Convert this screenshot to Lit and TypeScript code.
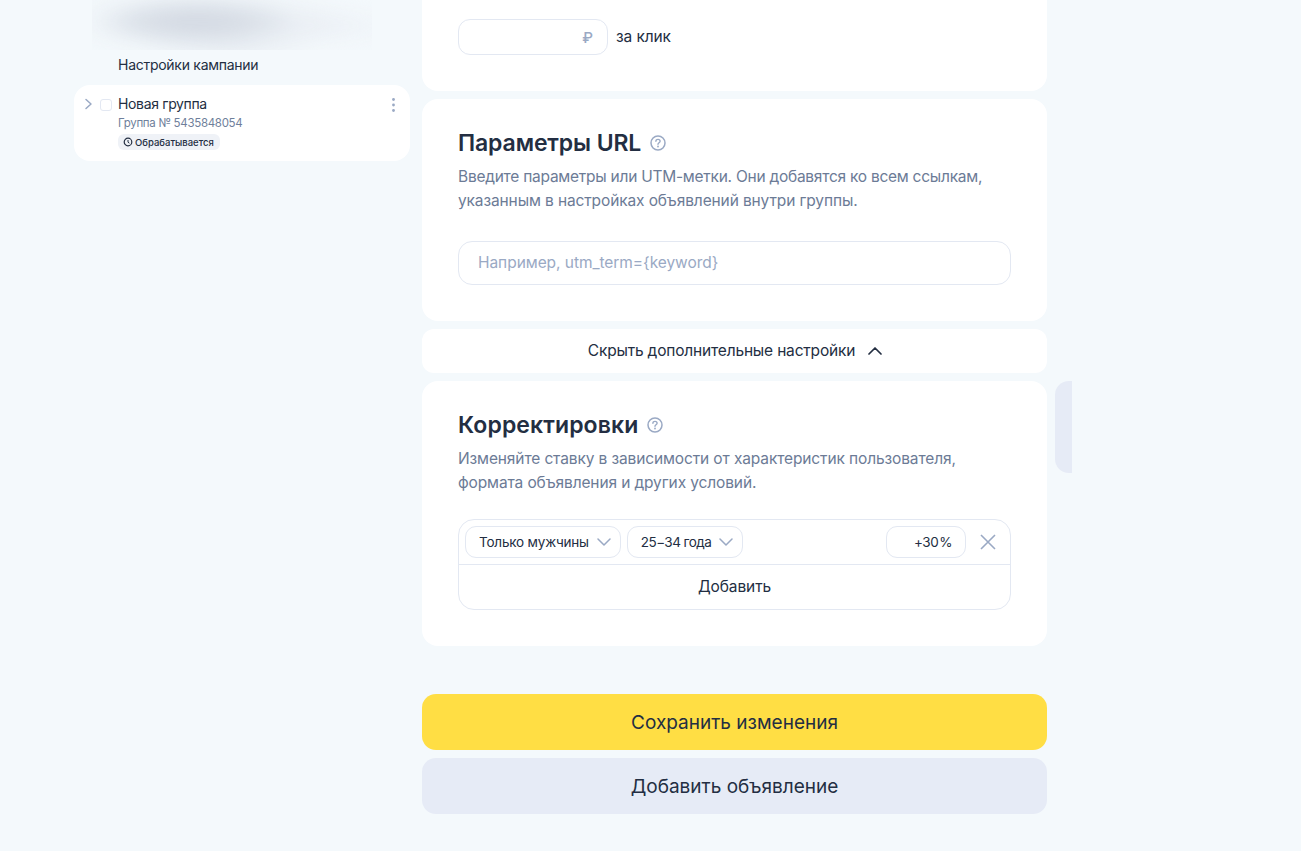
import { LitElement, html, css } from "lit";
import { customElement } from "lit/decorators.js";

const help = () => html`<svg class="help" width="18" height="18" viewBox="0 0 18 18" fill="none">
  <circle cx="9" cy="9" r="7" stroke="#9aa9c4" stroke-width="1.5"/>
  <path d="M6.9 7.3c0-1.2 1-1.9 2.1-1.9s2.1.7 2.1 1.8c0 1.5-2.1 1.6-2.1 3" stroke="#9aa9c4" stroke-width="1.4" stroke-linecap="round"/>
  <circle cx="9" cy="12.5" r=".9" fill="#9aa9c4"/></svg>`;

const chev = () => html`<svg class="chev" width="14" height="8" viewBox="0 0 14 8" fill="none">
  <path d="M1 1l6 6 6-6" stroke="#9aa9c4" stroke-width="1.5" stroke-linecap="round" stroke-linejoin="round"/></svg>`;

@customElement("app-root")
export class AppRoot extends LitElement {
  static styles = css`
    :host { display: block; height: 851px; overflow: hidden; background: #f4f9fc;
      font-family: Inter, "Noto Sans", sans-serif; color: #232e42; }
    * { box-sizing: border-box; }
    .page { display: flex; align-items: flex-start; padding-left: 74px; gap: 12px; }
    .side { width: 336px; flex: none; display: flex; flex-direction: column; }
    .blurwrap { height: 50px; margin-left: 18px; width: 280px; overflow: hidden; }
    .blur { height: 90px; margin: -20px -20px 0; filter: blur(8px); background:
      radial-gradient(ellipse 105px 24px at 125px 42px, #d2d8e2 0%, #dae0e8 55%, transparent 100%),
      radial-gradient(ellipse 150px 40px at 130px 40px, #e6ebf1 0%, transparent 100%),
      radial-gradient(ellipse 90px 14px at 160px 66px, #e6ebf1 0%, transparent 100%),
      radial-gradient(ellipse 120px 22px at 230px 46px, #ebeff5 0%, transparent 100%); }
    .camp { font-size: 14px; line-height: 20px; margin: 5px 0 10px 44px; letter-spacing: -.27px; }
    .group { background: #fff; border-radius: 16px; height: 76px; display: flex; padding: 10px 12px 0 10px; }
    .arrow { width: 9px; margin-top: 3px; flex: none; }
    .cb { width: 12px; height: 12px; border: 1px solid #e3e8f2; border-radius: 3px; margin: 4px 6px 0 7px; flex: none; }
    .ginfo { flex: 1; min-width: 0; }
    .gname { font-size: 14px; line-height: 18px; letter-spacing: -.35px; }
    .gnum { font-size: 11.5px; line-height: 16px; color: #6f7f9b; margin-top: 2px; letter-spacing: -.3px; }
    .badge { display: inline-flex; align-items: center; gap: 2px; height: 16px; padding: 0 6px 0 5px; margin-top: 3px;
      background: #eff2f7; border-radius: 6px; font-size: 9.5px; font-weight: 500; white-space: nowrap; }
    .dots { width: 3px; margin-top: 3px; flex: none; margin-right: 3px; }
    .main { width: 625px; flex: none; display: flex; flex-direction: column; gap: 8px; }
    .card { background: #fff; border-radius: 16px; padding: 36px; }
    .card.first { height: 91px; border-radius: 0 0 16px 16px; padding: 19px 36px 0; display: flex; gap: 8px; align-items: flex-start; }
    .price { width: 150px; height: 36px; border: 1px solid #e3e8f2; border-radius: 12px; display: flex; align-items: center;
      justify-content: flex-end; padding-right: 14px; color: #9aa9c4; font-size: 15px; font-weight: 500; }
    .perclick { font-size: 15.5px; line-height: 35px; letter-spacing: -.1px; }
    .card.url { height: 222px; padding-top: 28px; }
    .card.adj { height: 265px; padding-top: 28px; }
    .head { display: flex; align-items: center; gap: 8px; height: 32px; }
    h2 { margin: 0; font-size: 23px; line-height: 32px; font-weight: 600; letter-spacing: -.12px; }
    h2.wide { letter-spacing: .1px; }
    .help { flex: none; }
    p { margin: 6px 0 0; font-size: 15.5px; line-height: 24px; color: #6c7b96; letter-spacing: -.25px; white-space: nowrap; }
    p.wide, p .wide { letter-spacing: -.12px; }
    .input { margin-top: 28px; height: 44px; border: 1px solid #e3e8f2; border-radius: 14px; padding: 0 19px 2px; display: flex;
      align-items: center; font-size: 15.5px; color: #9aa9c4; letter-spacing: -.05px; }
    .toggle { height: 44px; background: #fff; border-radius: 12px; display: flex; align-items: center; justify-content: center;
      gap: 13px; font-size: 15.5px; letter-spacing: -.18px; padding-left: 1px; padding-bottom: 1px; }
    .table { margin-top: 24px; border: 1px solid #e3e8f2; border-radius: 16px; height: 91px; }
    .row { height: 45px; border-bottom: 1px solid #e3e8f2; display: flex; align-items: center; padding: 0 14px 0 6px; gap: 6px; }
    .sel { height: 32px; border: 1px solid #e3e8f2; border-radius: 11px; display: flex; align-items: center; font-size: 13.5px;
      padding: 0 9px 0 13px; gap: 8px; letter-spacing: -.2px; white-space: nowrap; }
    .sel.tight { letter-spacing: -.55px; }
    .spacer { flex: 1; }
    .pct { width: 80px; height: 32px; border: 1px solid #e3e8f2; border-radius: 11px; display: flex; align-items: center;
      justify-content: flex-end; padding-right: 13px; font-size: 13.5px; letter-spacing: -.5px; margin-right: 8px; }
    .pct span { margin-left: 1px; }
    .add { height: 44px; display: flex; align-items: center; justify-content: center; font-size: 15.5px; letter-spacing: -.1px; padding-bottom: 1px; }
    .btn { height: 56px; border-radius: 14px; display: flex; align-items: center; justify-content: center; font-size: 19px; }
    .save { background: #ffde44; margin-top: 40px; }
    .more { background: #e6ebf6; }
    .tabcol { margin: 381px 0 0 -4px; width: 17px; height: 92px; background: #e6ebf6; border-radius: 14px 0 0 14px; flex: none; }
  `;

  render() {
    return html`<div class="page">
      <aside class="side">
        <div class="blurwrap"><div class="blur"></div></div>
        <div class="camp">Настройки кампании</div>
        <div class="group">
          <svg class="arrow" width="9" height="12" viewBox="0 0 9 12" fill="none"><path d="M2 1.5L7 6l-5 4.5" stroke="#9aa9c4" stroke-width="1.5" stroke-linecap="round" stroke-linejoin="round"/></svg>
          <span class="cb"></span>
          <div class="ginfo">
            <div class="gname">Новая группа</div>
            <div class="gnum">Группа № 5435848054</div>
            <span class="badge">
              <svg width="10" height="10" viewBox="0 0 10 10" fill="none"><circle cx="5" cy="5" r="3.8" stroke="#232e42" stroke-width="1.2"/><path d="M5 3v2.2l1.4 1" stroke="#232e42" stroke-width="1"/></svg>
              Обрабатывается
            </span>
          </div>
          <svg class="dots" width="3" height="14" viewBox="0 0 3 14" fill="#9aa9c4"><circle cx="1.5" cy="1.5" r="1.4"/><circle cx="1.5" cy="7" r="1.4"/><circle cx="1.5" cy="12.5" r="1.4"/></svg>
        </div>
      </aside>
      <main class="main">
        <section class="card first">
          <div class="price">₽</div>
          <span class="perclick">за клик</span>
        </section>
        <section class="card url">
          <div class="head"><h2>Параметры URL</h2>${help()}</div>
          <p>Введите параметры или UTM-метки. Они добавятся ко всем ссылкам,<br><span class="wide">указанным в настройках объявлений внутри группы.</span></p>
          <div class="input">Например, utm_term={keyword}</div>
        </section>
        <div class="toggle">Скрыть дополнительные настройки
          <svg width="14" height="8" viewBox="0 0 14 8" fill="none"><path d="M1 7l6-6 6 6" stroke="#232e42" stroke-width="1.7" stroke-linecap="round" stroke-linejoin="round"/></svg>
        </div>
        <section class="card adj">
          <div class="head"><h2 class="wide">Корректировки</h2>${help()}</div>
          <p class="wide">Изменяйте ставку в зависимости от характеристик пользователя,<br>формата объявления и других условий.</p>
          <div class="table">
            <div class="row">
              <div class="sel">Только мужчины ${chev()}</div>
              <div class="sel tight">25−34 года ${chev()}</div>
              <div class="spacer"></div>
              <div class="pct">+30<span>%</span></div>
              <svg width="16" height="16" viewBox="0 0 16 16" fill="none"><path d="M1 1l14 14M15 1L1 15" stroke="#9aa9c4" stroke-width="1.6"/></svg>
            </div>
            <div class="add">Добавить</div>
          </div>
        </section>
        <div class="btn save">Сохранить изменения</div>
        <div class="btn more">Добавить объявление</div>
      </main>
      <div class="tabcol"></div>
    </div>`;
  }
}
